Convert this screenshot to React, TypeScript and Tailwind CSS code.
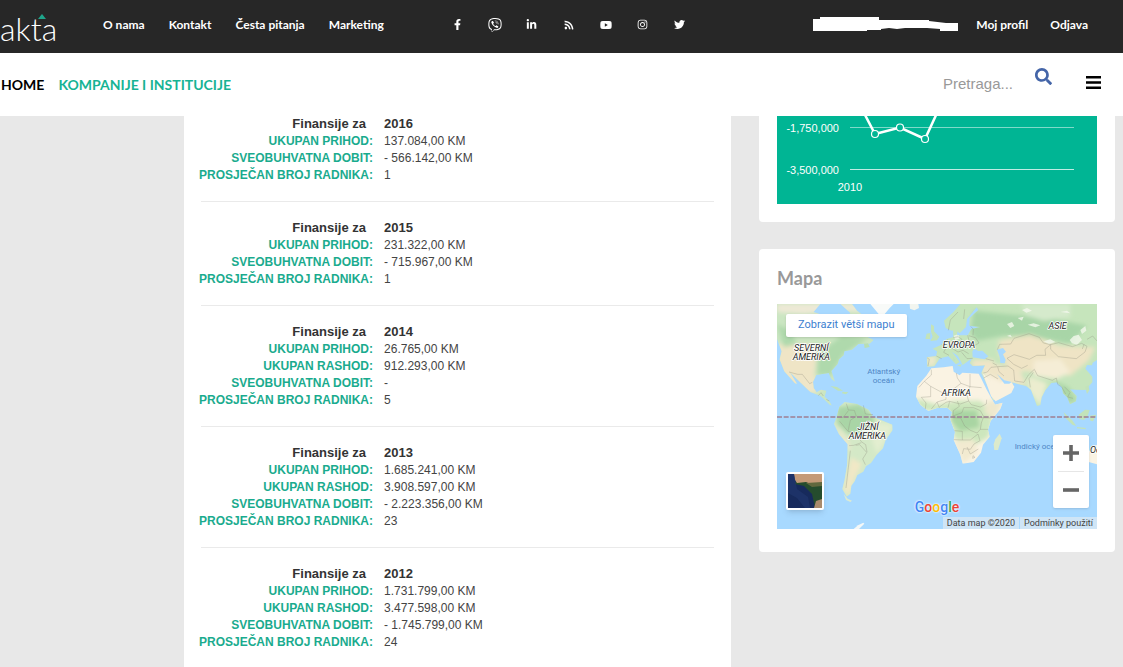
import React from "react";
import {
  FaFacebookF,
  FaInstagram,
  FaLinkedinIn,
  FaRss,
  FaSearch,
  FaTwitter,
  FaViber,
  FaYoutube,
} from "react-icons/fa";

const menuLinks = ["O nama", "Kontakt", "Česta pitanja", "Marketing"];

const socialLinks = [
  { name: "Facebook", icon: <FaFacebookF size={11} /> },
  { name: "Viber", icon: <FaViber size={14} /> },
  { name: "LinkedIn", icon: <FaLinkedinIn size={11} /> },
  { name: "RSS", icon: <FaRss size={10} /> },
  { name: "YouTube", icon: <FaYoutube size={12} /> },
  { name: "Instagram", icon: <FaInstagram size={11} /> },
  { name: "Twitter", icon: <FaTwitter size={11} /> },
];

type Year = { year: string; rows: [string, string][] };

const INCOME = "UKUPAN PRIHOD:";
const EXPENSE = "UKUPAN RASHOD:";
const PROFIT = "SVEOBUHVATNA DOBIT:";
const WORKERS = "PROSJEČAN BROJ RADNIKA:";

const years: Year[] = [
  { year: "2016", rows: [[INCOME, "137.084,00 KM"], [PROFIT, "- 566.142,00 KM"], [WORKERS, "1"]] },
  { year: "2015", rows: [[INCOME, "231.322,00 KM"], [PROFIT, "- 715.967,00 KM"], [WORKERS, "1"]] },
  { year: "2014", rows: [[INCOME, "26.765,00 KM"], [EXPENSE, "912.293,00 KM"], [PROFIT, "-"], [WORKERS, "5"]] },
  { year: "2013", rows: [[INCOME, "1.685.241,00 KM"], [EXPENSE, "3.908.597,00 KM"], [PROFIT, "- 2.223.356,00 KM"], [WORKERS, "23"]] },
  { year: "2012", rows: [[INCOME, "1.731.799,00 KM"], [EXPENSE, "3.477.598,00 KM"], [PROFIT, "- 1.745.799,00 KM"], [WORKERS, "24"]] },
];

function Header() {
  return (
    <header className="z-10 font-[Lato,sans-serif]">
      <div className="flex h-[53px] items-center bg-[#272727] pr-[35px] text-[12px] leading-4 font-bold text-white">
        <a href="#" aria-label="akta" className="relative w-[103px] shrink-0 pt-1 text-[32px] leading-[48px] font-light">
          akta
          <svg viewBox="0 0 8 5" className="absolute top-[13px] left-[38px] h-[5px] w-2" aria-hidden="true">
            <path d="M4 0 8 5H0Z" fill="#1fa58b" />
          </svg>
        </a>
        <nav className="flex w-[336px] shrink-0 gap-6 pb-1 whitespace-nowrap">
          {menuLinks.map((label) => (
            <a key={label} href="#">{label}</a>
          ))}
        </nav>
        <div className="flex shrink-0 items-center pb-1">
          {socialLinks.map((s) => (
            <a key={s.name} href="#" aria-label={s.name} className="flex w-[37px] justify-center">
              {s.icon}
            </a>
          ))}
        </div>
        <div className="ml-auto flex items-center pb-1 whitespace-nowrap">
          <svg viewBox="0 0 145 16" className="mr-[18px] h-4 w-[145px]" aria-hidden="true">
            <path d="M0 2H7V0H66V3H116V4L133 6H145V14H127V12L114 11H92L84 12 76 11 68 12V13H54V14H0Z" fill="#fff" />
          </svg>
          <a href="#" className="mr-[22px]">Moj profil</a>
          <a href="#">Odjava</a>
        </div>
      </div>
      <div className="flex h-[63px] items-center bg-white pr-[22px] pl-px text-[14px] font-bold">
        <a href="#" className="mr-[14px] text-black">HOME</a>
        <a href="#" className="text-[#16b394]">KOMPANIJE I INSTITUCIJE</a>
        <input
          type="text"
          aria-label="Pretraga"
          placeholder="Pretraga..."
          className="ml-auto w-[92px] font-['Liberation_Sans',sans-serif] text-[15px] font-normal text-gray-700 outline-none placeholder:text-[#999]"
        />
        <button type="button" aria-label="Traži" className="mr-[34px] mb-4 text-[#4465a8]">
          <FaSearch size={17} />
        </button>
        <button type="button" aria-label="Meni" className="mb-1">
          <svg viewBox="0 0 15 13" className="h-[13px] w-[15px]">
            <path d="M0 1.3H15M0 6.5H15M0 11.7H15" stroke="#000" strokeWidth="2.6" />
          </svg>
        </button>
      </div>
    </header>
  );
}

function YearTable({ year, rows }: Year) {
  return (
    <table className="w-full border-collapse text-left text-[13px] leading-[17px] text-[#444]">
      <thead>
        <tr className="h-[18px] leading-[18px] text-[#333]">
          <th className="w-[185px] pr-[18px] text-right">Finansije za</th>
          <th>{year}</th>
        </tr>
      </thead>
      <tbody>
        {rows.map(([label, value]) => (
          <tr key={label}>
            <th scope="row" className="pr-[11px] text-right text-[12px] whitespace-nowrap text-[#1aab8e]">{label}</th>
            <td className="text-[12px]">{value}</td>
          </tr>
        ))}
      </tbody>
    </table>
  );
}

function ProfitChart() {
  return (
    <svg viewBox="0 0 320 89" className="block w-full bg-[#00b594] font-['Liberation_Sans',sans-serif]" fontSize="11" fill="#fff">
      <path d="M73 12.5H297" stroke="#7fdac9" />
      <path d="M73 54.5H297" stroke="#bfece4" />
      <path d="M87 -2 98 19 123 12.500 148 24 160 -2" fill="none" stroke="#fff" strokeWidth="2.500" />
      <g fill="#00b594" stroke="#fff" strokeWidth="1.200">
        <circle cx="98" cy="19" r="3.500" />
        <circle cx="123" cy="12.500" r="3.500" />
        <circle cx="148" cy="24" r="3.500" />
      </g>
      <text x="62" y="17" textAnchor="end">-1,750,000</text>
      <text x="62" y="59" textAnchor="end">-3,500,000</text>
      <text x="73" y="76" textAnchor="middle">2010</text>
    </svg>
  );
}

function WorldMap() {
  return (
    <svg viewBox="0 0 960 675" preserveAspectRatio="xMidYMid slice" className="h-full w-full" role="img" aria-label="Mapa svijeta">
      <defs>
        <clipPath id="africa">
          <path d="M463 193 500 190 527 186 530 203 548 214 556 206 605 209 612 222 628 255 645 286 654 302 677 296 670 315 641 351 633 377 638 398 618 422 612 446 590 474 557 479 550 452 530 408 534 384 520 347 525 324 511 311 480 312 454 321 430 302 417 278 421 246 448 215Z" />
        </clipPath>
        <clipPath id="south">
          <path d="M187 308 203 294 240 300 275 317 288 338 346 362 347 378 326 407 318 433 299 452 282 477 267 487 259 503 241 513 233 532 223 545 220 569 209 578 196 555 203 526 210 484 212 421 186 391 171 360 178 342Z" />
        </clipPath>
        <filter id="soft" x="-20%" y="-20%" width="140%" height="140%">
          <feGaussianBlur stdDeviation="6" />
        </filter>
        <clipPath id="eurasia">
          <path d="M451 188 449 160 478 156 480 142 467 134 493 122 509 105 529 99 528 78 542 76 540 94 572 94 583 75 610 69 577 65 578 42 604 18 599 10 570 45 567 69 548 88 535 77 524 80 506 72 501 50 530 23 550 0H960V168L947 176 945 184 930 183 925 194 946 218 946 235 925 258 896 257 879 256 899 276 897 292 879 301 871 280 858 268 855 249 839 235 823 237 805 259 794 280 790 303 780 306 762 257 747 246 705 235 710 249 702 265 666 286 648 289 636 255 613 207 624 184 587 186 578 177 586 162 557 183 543 156 525 143 548 174 537 181 514 157 489 163 472 187Z" />
        </clipPath>
        <clipPath id="north">
          <path d="M0 0H225L240 20 266 40 286 82 270 98 290 108 278 119 244 120 225 137 202 142 200 154 186 166 182 180 163 201 174 233 163 225 155 207 118 213 108 233 110 252 119 265 132 257 148 260 143 278 157 291 164 304 184 308 159 303 131 276 100 264 62 227 38 204 60 239 54 238 22 202 8 166 14 142 0 105Z" />
        </clipPath>
      </defs>

      <rect width="960" height="675" fill="#a8d9ff" />

      <g clipPath="url(#north)">
        <rect width="400" height="320" fill="#cbe6c2" />
        <g filter="url(#soft)">
          <path d="M0 0H280V25L180 20 80 30 0 25Z" fill="#eee9d6" />
          <path d="M0 120H105L120 150 112 215 145 250 60 280 0 200Z" fill="#efe5c6" />
          <path d="M122 150 195 95 270 105 200 150 160 215 120 212Z" fill="#afd9ac" />
          <path d="M0 60 40 80 60 120 20 130Z" fill="#afd9ac" />
          <path d="M85 225 120 262 110 270 75 235Z" fill="#f0e6cb" />
        </g>
      </g>
      <path d="M110 24 130 0H190L220 27 205 45 185 28 170 45 140 34Z" fill="#a8d9ff" />
      <path d="M280 0H350L338 12 323 30 305 30Z" fill="#f8faf8" />
      <path d="M398 0H424L426 12 412 19 399 14Z" fill="#f2f5ef" />
      <path d="M261 119 273 118 278 129 263 132Z" fill="#b9dfb3" />
      <path d="M160 246 180 249 198 260 183 260ZM197 263 214 265 207 271 195 268Z" fill="#bfe2b8" />

      <g clipPath="url(#south)">
        <rect x="160" y="280" width="200" height="310" fill="#d4e9c7" />
        <g filter="url(#soft)">
          <path d="M180 310 250 300 295 345 275 380 215 390 180 360Z" fill="#a9d5a6" />
          <path d="M295 355 350 362 325 410 300 450 285 410Z" fill="#e3eed0" />
          <path d="M222 460 255 480 235 520 215 575 200 560Z" fill="#f1e8c6" />
          <path d="M170 355 213 410 222 440 205 430Z" fill="#f0e8cc" />
        </g>
      </g>
      <path d="M200 570 212 584 225 590 220 594 207 588Z" fill="#dcebd2" />
      <path d="M230 675 243 664 259 656 262 659 246 675Z" fill="#f5f8f7" />

      <g clipPath="url(#eurasia)">
        <rect x="440" width="520" height="310" fill="#c6e5bc" />
        <g filter="url(#soft)">
          <path d="M590 20 830 45 930 65 880 120 760 95 680 95 600 110 580 85Z" fill="#a8d5a7" />
          <path d="M730 0H880V40L800 50 750 35Z" fill="#d5eacc" />
          <path d="M665 110 760 92 850 125 955 130 935 170 880 215 790 205 700 200 665 150Z" fill="#efe4c5" />
          <path d="M770 170 850 165 880 205 840 225 770 215Z" fill="#f5edd6" />
          <path d="M590 180 660 180 730 200 750 245 700 240 650 225 590 190Z" fill="#efe5c8" />
          <path d="M618 205 660 225 720 250 650 290Z" fill="#f9f1df" />
          <path d="M752 215 810 238 790 305 755 260Z" fill="#ecedcf" />
          <path d="M820 225 875 250 900 290 875 298 850 255Z" fill="#aad6a5" />
          <path d="M450 155 480 157 474 187 450 188Z" fill="#ece8cb" />
          <path d="M585 168 650 166 650 188 585 188Z" fill="#efe5c7" />
        </g>
        <g fill="#f3f7ec" opacity="0.8">
          <path d="M690 60 705 54 712 66 700 72ZM722 42 740 38 735 50ZM752 62 770 58 790 64 775 70ZM800 112 820 106 835 114 815 120ZM878 108 890 96 905 92 915 108 900 122 885 118ZM910 78 925 66 928 80 915 90ZM735 18 750 12 765 20 748 26ZM850 24 870 20 880 28ZM530 95 545 90 548 104 535 108ZM560 112 572 106 576 120ZM690 96 700 92 705 100Z" />
        </g>
      </g>
      <g fill="#c3e3ba">
        <path d="M462 61 471 66 471 82 487 98 480 109 460 111 467 98 462 83ZM449 89 460 87 459 105 445 105Z" />
        <path d="M528 160 535 167 532 174 527 168ZM540 184 554 181 551 188Z" />
        <path d="M860 325 885 348 898 366 886 362 866 342ZM905 332 924 317 938 318 932 336 921 348 907 345ZM938 335 958 332 948 352 940 350ZM900 369 927 372 925 376 900 373ZM925 250 934 243 937 259 930 270Z" />
      </g>
      <path d="M586 142 592 134 604 141 616 140 634 157 623 166 601 162 587 160Z" fill="#a8d9ff" />
      <path d="M660 137 678 132 687 143 678 151 686 168 683 178 670 177 668 158Z" fill="#a8d9ff" />
      <path d="M617 207 647 237 655 250 682 229 684 235 703 235 712 248 703 267 656 292 642 276Z" fill="#f9f1df" />
      <path d="M660 210 682 229 704 234 697 239 682 239Z" fill="#a8d9ff" />

      <g clipPath="url(#africa)">
        <rect x="410" y="180" width="275" height="305" fill="#faf3e3" />
        <g filter="url(#soft)">
          <path d="M415 282 480 302 540 290 610 290 650 330 635 400 580 430 530 400 515 320 430 320Z" fill="#cde7bd" />
          <path d="M525 318 600 318 608 370 550 382 520 350Z" fill="#a9d5a3" />
          <path d="M633 290 680 290 650 350 620 320Z" fill="#eee8cd" />
          <path d="M530 410 590 405 600 440 560 480Z" fill="#f2ead0" />
        </g>
      </g>
      <path d="M668 389 674 403 663 438 652 438 650 421 655 406Z" fill="#dceacb" />
      <path d="M934 445 945 430 960 422V481L935 474Z" fill="#faf3e3" />

      <g fill="none" stroke="#8d8b7c" strokeWidth="1.300" strokeLinejoin="round" opacity="0.75">
        <path d="M36 204 62 211 76 211 98 239 106 235M124 275 132 266 139 276M148 286 157 291" />
        <path d="M208 299 214 318 232 319 238 337 220 349 213 382 188 352M180 340 199 340 214 320M259 304 265 330 288 332M213 382 235 386 253 413 266 422 270 444 257 465 265 482M216 425 230 424 253 416M220 440 213 500 207 552M236 424 248 422 268 444" />
        <path d="M463 197 463 213 442 232 426 250M442 232 461 247 461 278 433 280M461 247 507 272 552 238 541 222 538 207M552 238 579 248 579 210M579 248 614 251M579 248 570 274 575 291 550 300 518 292 507 295 487 309M507 272 507 286 480 294 463 315M433 280 447 297 445 315M480 294 487 311M518 292 513 311M541 291 547 307 529 320 528 336 555 326 560 311 590 311 610 320M575 291 583 302 610 309 628 300 629 287M610 320 620 338 613 357 610 376 600 387 580 379 563 366 551 342 528 341M530 407 556 408 556 382 532 380M556 408 580 408 603 390 609 410 591 420 580 436 560 434 556 450M610 376 633 376M570 429 580 450 604 435M612 341 641 342M588 455 594 460 587 463Z" />
        <path d="M619 207 631 204 642 190 662 188 666 203 681 216M620 222 640 211 663 225M661 137 668 121 701 120 711 103 756 89 787 100 799 117 821 122 804 136 806 154 779 154 757 166 741 161 711 152 690 163 710 181 734 193 752 184M662 188 693 186 710 198 713 231 741 235 754 213 772 196M821 122 845 116 886 128 914 118 930 127 924 144 898 164 844 158 821 136ZM772 196 782 215 826 229 838 222 842 241 854 249 866 270M769 205 756 224 760 250M862 248 879 265 872 279 888 283M930 106 947 96 960 111M916 135 921 121" />
        <path d="M451 162 457 166 453 186M478 156 494 164M494 122 507 132 500 145 516 154M511 107 526 117 525 133 543 144 558 139 575 149M529 101 543 98 555 106 543 120 529 118M572 94 576 109 567 130M575 95 595 101 606 117 586 128 571 119M554 145 570 164 587 163M514 79 520 48 543 24M560 45 563 16M581 67 589 76 588 94M626 164 651 171M647 177 660 184" />
      </g>

      <path d="M0 339H960" stroke="#9f7f93" strokeWidth="4.500" strokeDasharray="15 5" />

      <g fontFamily="Roboto, sans-serif" fontSize="27" textAnchor="middle">
        <g fontStyle="italic" fill="#222" stroke="#fff" strokeWidth="5" strokeLinejoin="round" paintOrder="stroke">
          <text x="103" y="142">SEVERNÍ</text>
          <text x="103" y="168">AMERIKA</text>
          <text x="842" y="75">ASIE</text>
          <text x="546" y="133">EVROPA</text>
          <text x="538" y="275">AFRIKA</text>
          <text x="273" y="378">JIŽNÍ</text>
          <text x="271" y="404">AMERIKA</text>
          <text x="939" y="448" textAnchor="start">Oc</text>
        </g>
        <g fill="#4f86c6" fontSize="24">
          <text x="320" y="211">Atlantský</text>
          <text x="320" y="236">oceán</text>
          <text x="713" y="434" textAnchor="start">Indický oceán</text>
        </g>
      </g>
    </svg>
  );
}

function MapPanel() {
  return (
    <div className="relative h-[225px] overflow-hidden font-[Roboto,sans-serif]">
      <WorldMap />
      <a href="#" className="absolute top-[10px] left-[9px] flex h-[23px] items-center rounded-xs bg-white px-3 text-[11px] text-[#3d7fd0] shadow-sm">
        Zobrazit větší mapu
      </a>
      <button type="button" aria-label="Satelitní" className="absolute bottom-[19px] left-[9px] rounded-xs border-2 border-white bg-white shadow-md">
        <svg viewBox="0 0 34 34" className="block size-[34px]">
          <rect width="34" height="34" fill="#172a5c" />
          <path d="M6 0H34V34H27L24 20 16 12 7 10 9 4Z" fill="#254c2d" />
          <path d="M6 0H34V9L25 11 18 8 9 9 7 6Z" fill="#c49a78" />
          <path d="M18 9 34 8V12L24 13Z" fill="#61683e" />
          <path d="M28 27 34 25V34H26Z" fill="#a98a6c" />
          <path d="M0 0H6L9 15 20 23 22 34H17L9 24 0 19Z" fill="#223970" opacity=".6" />
        </svg>
      </button>
      <div className="absolute right-2 bottom-[21px] flex h-[73px] w-9 flex-col items-center rounded-xs bg-white shadow-sm">
        <button type="button" aria-label="Přiblížit" className="flex w-full flex-1 items-center justify-center">
          <svg viewBox="0 0 16 16" className="size-4">
            <path d="M8 0V16M0 8H16" stroke="#666" strokeWidth="3.600" />
          </svg>
        </button>
        <span className="h-px w-[26px] bg-[#e6e6e6]" />
        <button type="button" aria-label="Oddálit" className="flex w-full flex-1 items-center justify-center">
          <svg viewBox="0 0 16 16" className="size-4">
            <path d="M0 8H16" stroke="#666" strokeWidth="3.600" />
          </svg>
        </button>
      </div>
      <div className="absolute inset-x-0 bottom-3 flex justify-center text-[14px] leading-5 font-medium [text-shadow:0_0_2px_#fff,0_0_2px_#fff]">
        <span className="text-[#4285f4]">G</span>
        <span className="text-[#ea4335]">o</span>
        <span className="text-[#fbbc05]">o</span>
        <span className="text-[#4285f4]">g</span>
        <span className="text-[#34a853]">l</span>
        <span className="text-[#ea4335]">e</span>
      </div>
      <div className="absolute right-0 bottom-0 flex gap-px text-[9px] leading-3 text-[#444]">
        <span className="bg-[#cfe5f6] px-1">Data map ©2020</span>
        <a href="#" className="bg-[#cfe5f6] px-1">Podmínky použití</a>
      </div>
    </div>
  );
}

export default function App() {
  return (
    <div className="flex h-screen flex-col overflow-hidden bg-[#e8e8e8] font-['Liberation_Sans',sans-serif]">
      <Header />
      <main className="-mt-px grid min-h-0 flex-1 grid-cols-[547fr_356fr] gap-7 overflow-hidden pr-2 pl-[184px]">
        <section className="divide-y divide-[#eaeaea] bg-white px-[17px]">
          {years.map((y, i) => (
            <div key={y.year} className={i === 0 ? "pb-[17px]" : "pt-[17px] pb-[17px]"}>
              <div className="-ml-0.5">
                <YearTable {...y} />
              </div>
            </div>
          ))}
        </section>
        <aside>
          <section className="rounded-b bg-white px-[18px] pb-[18px]">
            <ProfitChart />
          </section>
          <section className="mt-[27px] rounded bg-white px-[18px] pt-[18px] pb-[23px]">
            <h2 className="mb-[14px] font-[Lato,sans-serif] text-[18px] leading-[23px] font-bold text-[#999]">Mapa</h2>
            <MapPanel />
          </section>
        </aside>
      </main>
    </div>
  );
}
